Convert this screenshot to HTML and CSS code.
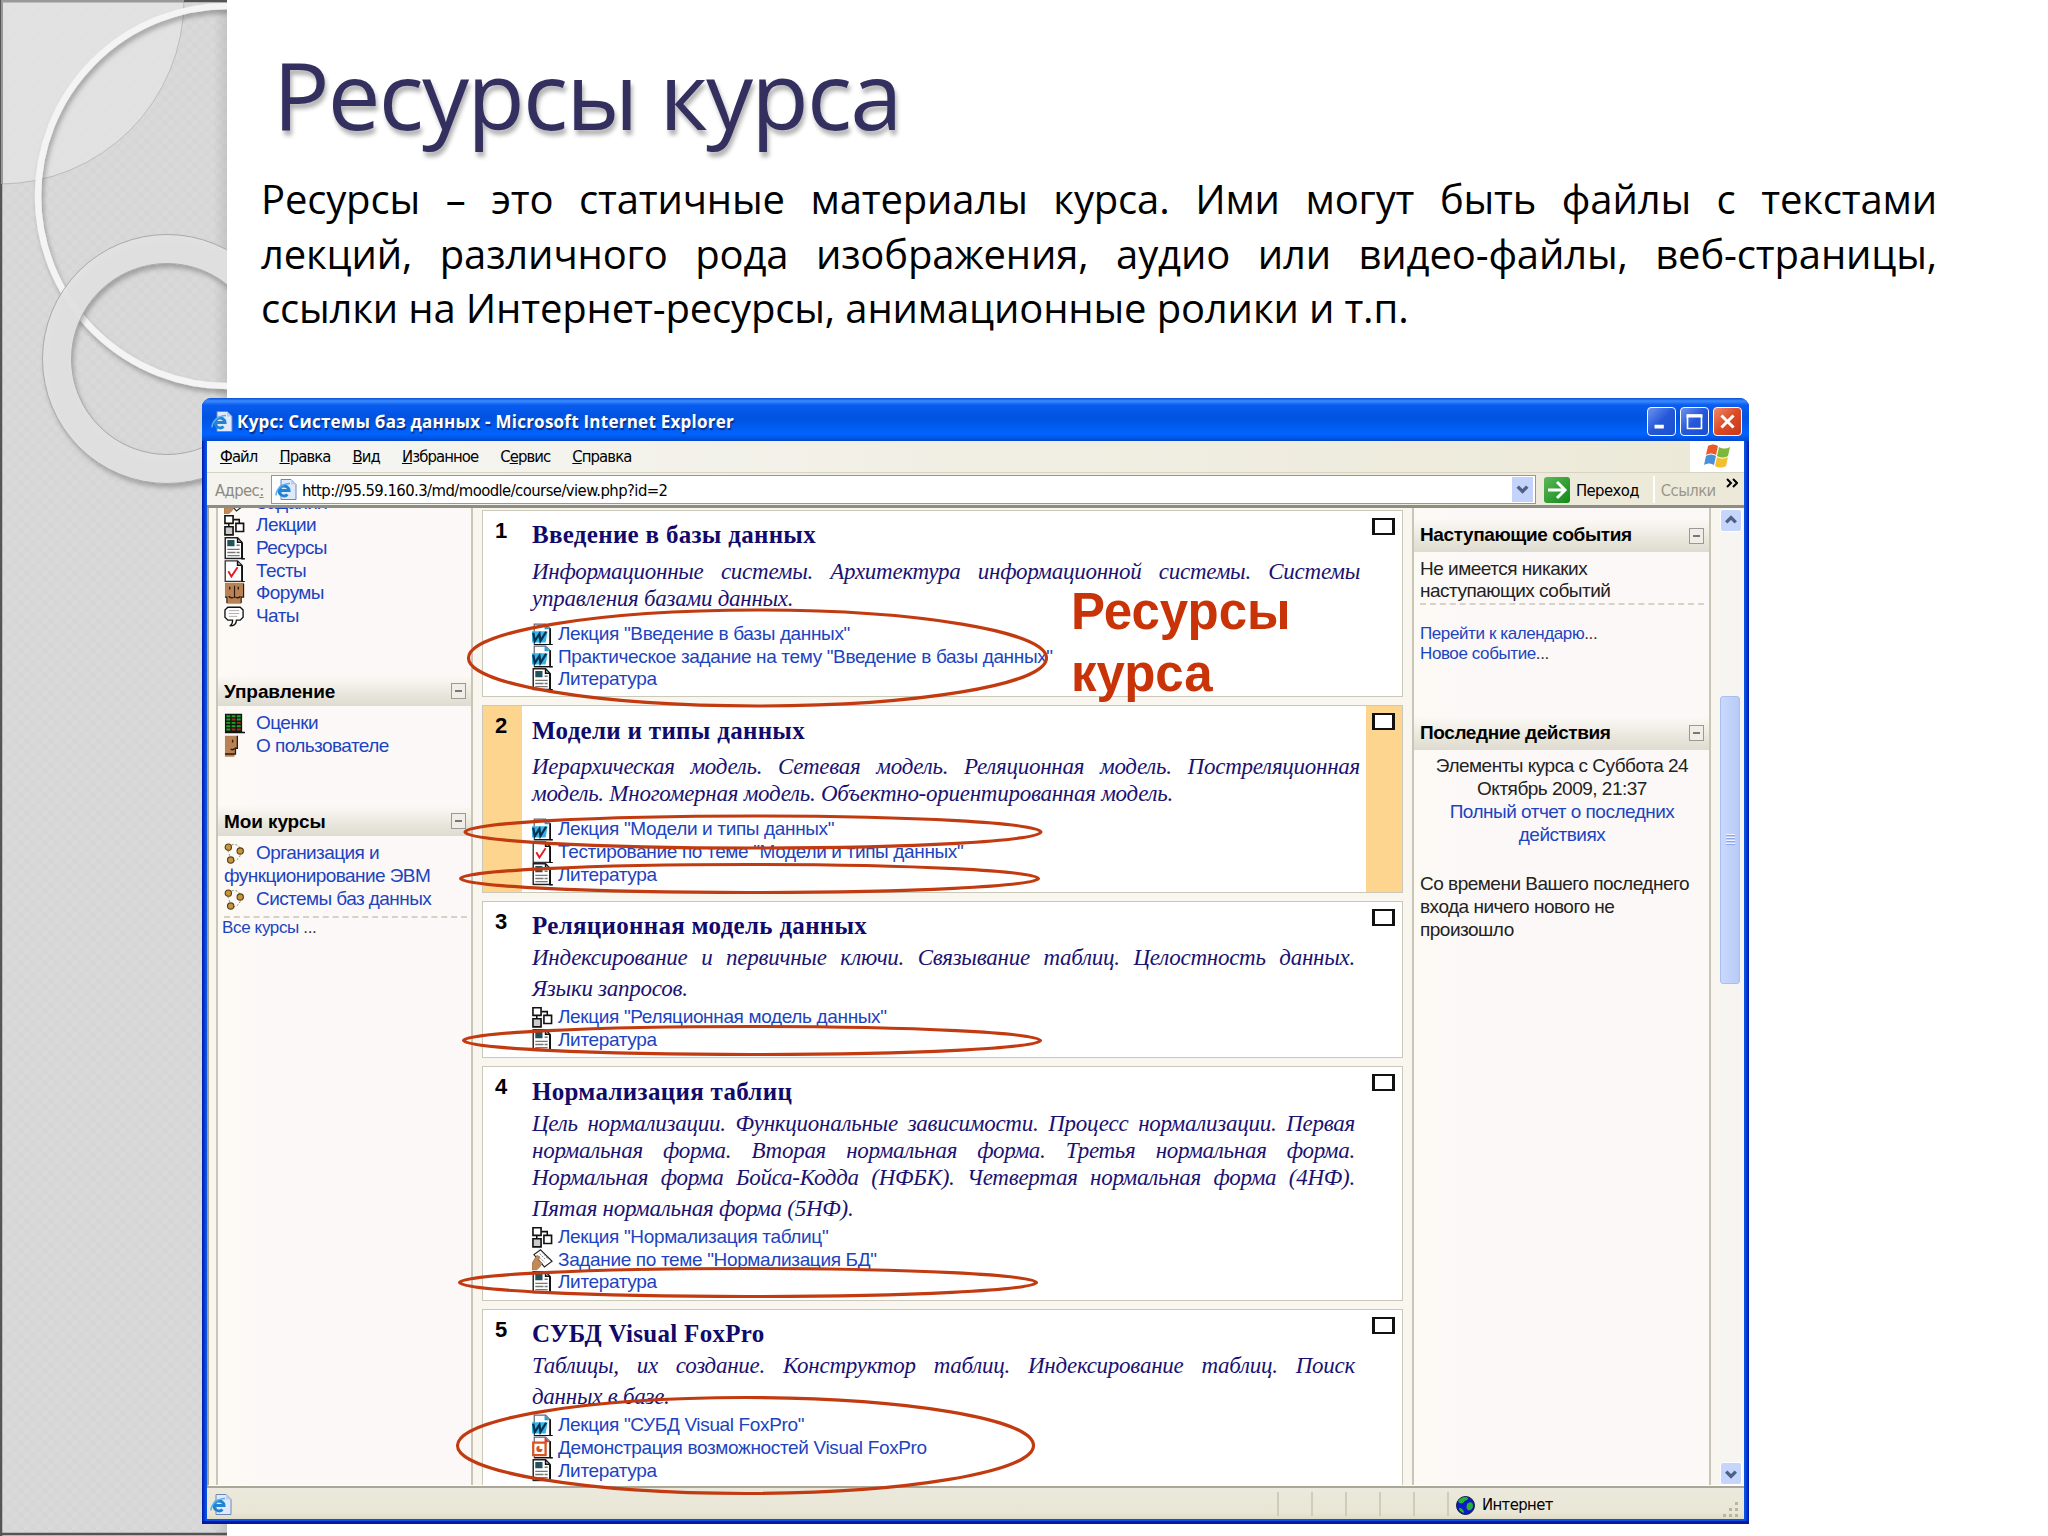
FILE: index.html
```html
<!DOCTYPE html>
<html lang="ru">
<head>
    <meta charset="UTF-8">
    <title>Ресурсы курса</title>
    <link rel="stylesheet" href="styles.css">
</head>
<body>
<!-- icons -->
<svg class="sprite" width="0" height="0">
    <symbol id="i-doc" viewBox="0 0 20 22">
        <path d="M1 .8h12l4 4v16H1z" fill="#fff" stroke="#222" stroke-width="1.4"/>
        <path d="M17.5 5v16.2H20M13 1v4h4" fill="none" stroke="#111" stroke-width="1.5"/>
        <path d="M3 3h7v6H3z" fill="#24505c"/>
        <path d="M12 8h3M3 12h12M3 15h8M12 15h3M3 18h12" stroke="#777" stroke-width="1.3"/>
    </symbol>
    <symbol id="i-word" viewBox="0 0 20 22">
        <path d="M2 1h11l4 4v16H2z" fill="#fff" stroke="#667" stroke-width="1.2"/>
        <path d="M17.5 5v16.2H20M2 21h16" fill="none" stroke="#111" stroke-width="1.5"/>
        <path d="M12 1l5 5h-5z" fill="#2a9bd8"/>
        <path d="M-1 8h16l-2 11H0z" fill="#36b4e6"/>
        <path d="M1 9.5l1.500 8 4.500-7 1 7 5.500-9" fill="none" stroke="#06304f" stroke-width="2.200"/>
    </symbol>
    <symbol id="i-ppt" viewBox="0 0 20 22">
        <path d="M2 1h11l4 4v16H2z" fill="#fff" stroke="#667" stroke-width="1.2"/>
        <path d="M17.500 5v16.200H20M2 21h16" fill="none" stroke="#111" stroke-width="1.500"/>
        <path d="M12 1l5 5h-5z" fill="#d33"/>
        <path d="M1 6.500h12v12H1z" fill="#fff" stroke="#d9531e" stroke-width="2.200"/>
        <path d="M7 9.500a3 3 0 1 0 3 3H7z" fill="#d9531e"/>
    </symbol>
    <symbol id="i-test" viewBox="0 0 20 22">
        <path d="M1 .8h12l4 4v16H1z" fill="#fff" stroke="#333" stroke-width="1.300"/>
        <path d="M17.500 5v16.200H20M13 1v4h4" fill="none" stroke="#111" stroke-width="1.500"/>
        <path d="M4 11l3 5 6-9" fill="none" stroke="#e3161c" stroke-width="1.800"/>
    </symbol>
    <symbol id="i-lesson" viewBox="0 0 22 22">
        <path d="M10 5h6v5M5 9v4" fill="none" stroke="#111" stroke-width="1.600"/>
        <path d="M1 1h8.500v8H1zM12.500 9h8v8.500h-8z" fill="#fff" stroke="#111" stroke-width="1.700"/>
        <path d="M1 12.500h8.500V21H1z" fill="#ccc" stroke="#111" stroke-width="1.700"/>
    </symbol>
    <symbol id="i-task" viewBox="0 0 22 22">
        <path d="M9 1l12 12-8 6L2 6z" fill="#fff" stroke="#222" stroke-width="1.200"/>
        <path d="M8 5l6 6M11 4l6 7M8 9l5 5" stroke="#888" stroke-dasharray="2 1"/>
        <path d="M0 22v-7l5-8 3 1-1 4 4 3-3 4-3 3z" fill="#c08a5a" stroke="#8a5a30" stroke-width=".6"/>
    </symbol>
    <symbol id="i-forum" viewBox="0 0 22 22">
        <path d="M1 0h20v15h-3v7H3v-7H1z" fill="#b98254"/>
        <path d="M11 3v13M1 15h2v6M20.500 1v14H18v6" fill="none" stroke="#2c1a0c" stroke-width="1.200"/>
        <path d="M6 4v3M15 4v3M5 14c2 2 4 2 5 1M12 15c2 1 4 1 5-1" fill="none" stroke="#2c1a0c" stroke-width="1.400"/>
    </symbol>
    <symbol id="i-chat" viewBox="0 0 22 22">
        <path d="M4 1.500h13l3 3V12l-3 3h-4c0 4-2 6-7 6 2-1 3-3 3-6H4l-3-3V4.500z" fill="#fff" stroke="#111" stroke-width="1.400"/>
        <path d="M5 5h11M5 8h11M5 11h9" stroke="#aaa"/>
    </symbol>
    <symbol id="i-grades" viewBox="0 0 22 22">
        <path d="M1 1h18v19H1z" fill="#0d1a0d"/>
        <path d="M2.500 3.500h4M2.500 7h4M2.500 10.500h4M2.500 14h4M2.500 17.500h4M8 3.500h4M8 10.500h4M8 14h4M13.500 7h4M13.500 14h4M13.500 3.500h4" stroke="#1fa52a" stroke-width="2"/>
        <path d="M8 7h4M13.500 10.500h4M8 17.500h4M13.500 17.500h4" stroke="#b3261b" stroke-width="2"/>
        <path d="M1 20.500h21" stroke="#111" stroke-width="1.500"/>
    </symbol>
    <symbol id="i-user" viewBox="0 0 22 22">
        <path d="M1 0h13v13h-2v5h-1v4H1z" fill="#b98254"/>
        <path d="M14 0v13h-2v6H1M9 4v3M7 14c2 1 3 1 4-1" fill="none" stroke="#2c1a0c" stroke-width="1.400"/>
    </symbol>
    <symbol id="i-course" viewBox="0 0 22 22">
        <path d="M8 2c5-1 8 1 9 4M17 13c-1 3-3 5-7 6M4 8l3 8" fill="none" stroke="#886" stroke-dasharray="2 2"/>
        <g fill="#c9953c" stroke="#55401c" stroke-width="1.200">
            <circle cx="4.500" cy="4.500" r="3.300"/><circle cx="17" cy="8.500" r="3.300"/><circle cx="7" cy="18" r="3.300"/>
        </g>
    </symbol>
    <symbol id="i-ie" viewBox="0 0 22 22">
        <path d="M6 1h10l5 5v15H6z" fill="#dfe9fb" stroke="#6d86b8"/>
        <path d="M16 1v5h5z" fill="#b9cdec"/>
        <path d="M4.500 12h9.500a5 5 0 1 0-1.500 4" fill="none" stroke="#2183d4" stroke-width="3"/>
        <path d="M1 17C1 10 8 5 15 5" fill="none" stroke="#57aef0" stroke-width="1.500"/>
    </symbol>
</svg>

<div class="slide">
    <aside class="stripe">
        <svg width="227" height="1536" viewBox="0 0 227 1536">
            <defs>
                <pattern id="grain" width="12" height="12" patternUnits="userSpaceOnUse">
                    <path d="M0 0h6v6H0zM6 6h6v6H6z" fill="#fff" opacity=".07"/>
                </pattern>
                <linearGradient id="edge" x1="0" x2="1">
                    <stop offset="0" stop-color="#999" stop-opacity="0"/>
                    <stop offset="1" stop-color="#999" stop-opacity=".3"/>
                </linearGradient>
                <filter id="soft" x="-20%" y="-20%" width="140%" height="140%">
                    <feDropShadow dx="2" dy="4" stdDeviation="2.500" flood-color="#000" flood-opacity=".28"/>
                </filter>
            </defs>
            <rect width="227" height="1536" fill="#d6d6d6"/>
            <rect width="227" height="1536" fill="url(#grain)"/>
            <rect x="213" width="14" height="1536" fill="url(#edge)"/>
            <circle cx="0" cy="0" r="184" fill="#e4e4e4" fill-opacity=".75" stroke="#bbb"/>
            <circle cx="228" cy="196" r="190" fill="none" stroke="#f4f4f4" stroke-width="6.500" filter="url(#soft)"/>
            <circle cx="167" cy="359" r="110" fill="none" stroke="#e2e2e2" stroke-opacity=".93" stroke-width="29" filter="url(#soft)"/>
            <circle cx="167" cy="359" r="124.500" fill="none" stroke="#aaa"/>
            <circle cx="167" cy="359" r="95.500" fill="none" stroke="#aaa"/>
            <path d="M1 1536V1h226M1 1534h226" fill="none" stroke="#555" stroke-width="2.500"/>
            <path d="M2 184V1h182" fill="none" stroke="#999" stroke-width="2"/>
        </svg>
    </aside>
    <main class="text">
        <h1>Ресурсы курса</h1>
        <p class="lead">
            <span>Ресурсы – это статичные материалы курса. Ими могут быть файлы с текстами</span>
            <span>лекций, различного рода изображения, аудио или видео-файлы, веб-страницы,</span>
            <span class="last">ссылки на Интернет-ресурсы, анимационные ролики и т.п.</span>
        </p>
    </main>
</div>

<div class="window">
    <div class="titlebar">
        <svg class="ico"><use href="#i-ie"/></svg>
        <b>Курс: Системы баз данных - Microsoft Internet Explorer</b>
        <div class="win-btns">
            <svg viewBox="0 0 29 29"><path d="M7 20h10" stroke="#fff" stroke-width="4"/></svg>
            <svg viewBox="0 0 29 29"><path d="M7 8h15v14H7z" fill="none" stroke="#fff" stroke-width="1.800"/><path d="M6 8.500h17" stroke="#fff" stroke-width="3.500"/></svg>
            <svg class="close" viewBox="0 0 29 29"><path d="M8 8l13 13M21 8L8 21" stroke="#fff" stroke-width="3.200"/></svg>
        </div>
    </div>
    <div class="menubar">
        <span><u>Ф</u>айл</span><span><u>П</u>равка</span><span><u>В</u>ид</span><span><u>И</u>збранное</span><span>С<u>е</u>рвис</span><span><u>С</u>правка</span>
        <div class="flag">
            <svg width="28" height="26" viewBox="0 0 28 26">
                <path d="M5 2c4-2 7-2 10 0l-2 9c-3-2-6-2-10 0z" fill="#ea5a2b"/>
                <path d="M16 3c4 2 7 2 11 0l-2 9c-4 2-7 2-11 0z" fill="#7cb83a"/>
                <path d="M3 12c4-2 7-2 10 0l-2 9c-3-2-6-2-10 0z" fill="#4a90d9"/>
                <path d="M14 13c4 2 7 2 11 0l-2 9c-4 2-7 2-11 0z" fill="#f4bf2c"/>
            </svg>
        </div>
    </div>
    <div class="address">
        <span class="lbl">Адрес<u>:</u></span>
        <div class="url">
            <svg class="ico"><use href="#i-ie"/></svg>
            <span>http://95.59.160.3/md/moodle/course/view.php?id=2</span>
            <svg class="drop" viewBox="0 0 20 26"><path d="M5 10l5 5 5-5" fill="none" stroke="#4d6185" stroke-width="3.500"/></svg>
        </div>
        <svg class="go" viewBox="0 0 26 26"><path d="M4 13h16M13 5l8 8-8 8" fill="none" stroke="#fff" stroke-width="3"/></svg>
        <span class="go-text">Переход</span>
        <span class="links">Ссылки</span>
        <svg class="more" width="12" height="10" viewBox="0 0 12 10"><path d="M1 1l4 4-4 4M7 1l4 4-4 4" fill="none" stroke="#000" stroke-width="2"/></svg>
    </div>

    <div class="page">
        <div class="col left">
            <ul class="first">
                <li><svg><use href="#i-task"/></svg>Задания</li>
                <li><svg><use href="#i-lesson"/></svg>Лекции</li>
                <li><svg><use href="#i-doc"/></svg>Ресурсы</li>
                <li><svg><use href="#i-test"/></svg>Тесты</li>
                <li><svg><use href="#i-forum"/></svg>Форумы</li>
                <li><svg><use href="#i-chat"/></svg>Чаты</li>
            </ul>
            <h3>Управление<i></i></h3>
            <ul>
                <li><svg><use href="#i-grades"/></svg>Оценки</li>
                <li><svg><use href="#i-user"/></svg>О пользователе</li>
            </ul>
            <h3>Мои курсы<i></i></h3>
            <ul class="dashed">
                <li><svg><use href="#i-course"/></svg>Организация и</li>
                <li>функционирование ЭВМ</li>
                <li><svg><use href="#i-course"/></svg>Системы баз данных</li>
            </ul>
            <p class="small"><a>Все курсы</a> ...</p>
        </div>

        <div class="topics">
            <section class="topic">
                <b class="num">1</b>
                <div class="body">
                    <h2>Введение в базы данных</h2>
                    <p><span>Информационные системы. Архитектура информационной системы. Системы</span><span class="last">управления базами данных.</span></p>
                    <ul>
                        <li><svg><use href="#i-word"/></svg>Лекция "Введение в базы данных"</li>
                        <li><svg><use href="#i-word"/></svg>Практическое задание на тему "Введение в базы данных"</li>
                        <li><svg><use href="#i-doc"/></svg>Литература</li>
                    </ul>
                </div>
                <div class="side"><i></i></div>
            </section>
            <section class="topic current">
                <b class="num">2</b>
                <div class="body">
                    <h2>Модели и типы данных</h2>
                    <p><span>Иерархическая модель. Сетевая модель. Реляционная модель. Постреляционная</span><span class="last">модель. Многомерная модель. Объектно-ориентированная модель.</span></p>
                    <ul>
                        <li><svg><use href="#i-word"/></svg>Лекция "Модели и типы данных"</li>
                        <li><svg><use href="#i-test"/></svg>Тестирование по теме "Модели и типы данных"</li>
                        <li><svg><use href="#i-doc"/></svg>Литература</li>
                    </ul>
                </div>
                <div class="side"><i></i></div>
            </section>
            <section class="topic tight">
                <b class="num">3</b>
                <div class="body">
                    <h2>Реляционная модель данных</h2>
                    <p><span>Индексирование и первичные ключи. Связывание таблиц. Целостность данных.</span><span class="last">Языки запросов.</span></p>
                    <ul>
                        <li><svg><use href="#i-lesson"/></svg>Лекция "Реляционная модель данных"</li>
                        <li><svg><use href="#i-doc"/></svg>Литература</li>
                    </ul>
                </div>
                <div class="side"><i></i></div>
            </section>
            <section class="topic tight">
                <b class="num">4</b>
                <div class="body">
                    <h2>Нормализация таблиц</h2>
                    <p><span>Цель нормализации. Функциональные зависимости. Процесс нормализации. Первая</span><span>нормальная форма. Вторая нормальная форма. Третья нормальная форма.</span><span>Нормальная форма Бойса-Кодда (НФБК). Четвертая нормальная форма (4НФ).</span><span class="last">Пятая нормальная форма (5НФ).</span></p>
                    <ul>
                        <li><svg><use href="#i-lesson"/></svg>Лекция "Нормализация таблиц"</li>
                        <li><svg><use href="#i-task"/></svg>Задание по теме "Нормализация БД"</li>
                        <li><svg><use href="#i-doc"/></svg>Литература</li>
                    </ul>
                </div>
                <div class="side"><i></i></div>
            </section>
            <section class="topic tight">
                <b class="num">5</b>
                <div class="body">
                    <h2>СУБД Visual FoxPro</h2>
                    <p><span>Таблицы, их создание. Конструктор таблиц. Индексирование таблиц. Поиск</span><span class="last">данных в базе.</span></p>
                    <ul>
                        <li><svg><use href="#i-word"/></svg>Лекция "СУБД Visual FoxPro"</li>
                        <li><svg><use href="#i-ppt"/></svg>Демонстрация возможностей Visual FoxPro</li>
                        <li><svg><use href="#i-doc"/></svg>Литература</li>
                    </ul>
                </div>
                <div class="side"><i></i></div>
            </section>
        </div>

        <div class="col right">
            <h3>Наступающие события<i></i></h3>
            <p class="events">Не имеется никаких<br>наступающих событий</p>
            <p class="small"><a>Перейти к календарю</a>...<br><a>Новое событие</a>...</p>
            <h3>Последние действия<i></i></h3>
            <p class="recent">Элементы курса с Суббота 24<br>Октябрь 2009, 21:37<br><a>Полный отчет о последних<br>действиях</a></p>
            <p class="news">Со времени Вашего последнего<br>входа ничего нового не<br>произошло</p>
        </div>

        <div class="scroll">
            <svg class="sbtn" viewBox="0 0 20 22"><path d="M5 13l5-5 5 5" fill="none" stroke="#4d6185" stroke-width="3.500"/></svg>
            <div class="thumb"><i></i></div>
            <svg class="sbtn" viewBox="0 0 20 22"><path d="M5 9l5 5 5-5" fill="none" stroke="#4d6185" stroke-width="3.500"/></svg>
        </div>
    </div>

    <div class="status">
        <svg class="ico"><use href="#i-ie"/></svg>
        <i></i><i></i><i></i><i></i><i></i>
        <div class="zone">
            <svg width="19" height="19" viewBox="0 0 19 19">
                <circle cx="9.500" cy="9.500" r="9" fill="#1118c8" stroke="#0b1a3a"/>
                <path d="M2 5c3-4 8-5 10-3 1 2-3 2-4 4S3 8 2 5zM12 7c3-2 5 0 5 3s-3 5-5 4-2-5 0-7zM3 12c3 0 5 2 5 5-3-1-5-2-5-5z" fill="#27b336"/>
            </svg>
            Интернет
        </div>
        <svg class="grip" width="16" height="16" viewBox="0 0 16 16"><path d="M12 0h3v3h-3zM6 6h3v3H6zM12 6h3v3h-3zM0 12h3v3H0zM6 12h3v3H6zM12 12h3v3h-3z" fill="#b9b5a2"/></svg>
    </div>
</div>

<!-- marks over the browser window -->
<svg class="marks" width="2048" height="1536" viewBox="0 0 2048 1536">
    <ellipse cx="757.500" cy="658" rx="289" ry="48"/>
    <ellipse cx="753" cy="832" rx="288" ry="16"/>
    <ellipse cx="749.500" cy="878.500" rx="289" ry="14"/>
    <ellipse cx="752" cy="1040.500" rx="288.500" ry="14"/>
    <ellipse cx="748" cy="1282.500" rx="288.500" ry="14"/>
    <ellipse cx="745.500" cy="1445.500" rx="288" ry="48"/>
</svg>
<div class="callout">Ресурсы<br>курса</div>
</body>
</html>
```
FILE: styles.css
```css
body {
    margin: 0;
    width: 2048px;
    height: 1536px;
    overflow: hidden;
    position: relative;
    background: #fff;
    font-family: "Liberation Sans", Arial, sans-serif;
}

h1, h2, h3, p, ul {
    margin: 0;
    padding: 0;
}

ul {
    list-style: none;
}

.sprite {
    position: absolute;
}

/* slide */
.slide {
    display: grid;
    grid-template-columns: 227px 1fr;
    height: 1536px;
}

.stripe svg {
    display: block;
}

.text {
    padding: 30px 111px 0 34px;
    font-family: "Open Sans", "Noto Sans", sans-serif;
}

h1 {
    padding-left: 12px;
    font-size: 94px;
    font-weight: 400;
    line-height: 128px;
    letter-spacing: -1.8px;
    color: #33305f;
    text-shadow: 2px 5px 4px rgba(0, 0, 0, .3);
}

.lead {
    margin-top: 14px;
    font-size: 40px;
    line-height: 54.5px;
    letter-spacing: -.15px;
    color: #000;
}

.lead span, .body p span {
    display: block;
    white-space: nowrap;
    text-align: justify;
    text-align-last: justify;
}

.lead .last, .body p .last {
    text-align-last: left;
}

/* browser window */
.window {
    position: absolute;
    left: 202px;
    top: 398px;
    width: 1547px;
    height: 1126px;
    box-sizing: border-box;
    padding: 0 5px 5px;
    display: flex;
    flex-direction: column;
    border-radius: 9px 9px 0 0;
    background: linear-gradient(90deg, #0019a8, #0a52e6 4px, #0a52e6 1543px, #0019a8);
    box-shadow: inset 0 -3px 0 #0019a0;
}

.ico {
    width: 22px;
    height: 23px;
    flex: none;
}

.titlebar {
    height: 43px;
    box-sizing: border-box;
    flex: none;
    margin: 0 -5px;
    padding: 4px 7px 0 9px;
    display: flex;
    align-items: center;
    border-radius: 9px 9px 0 0;
    background: linear-gradient(#0a4fd0, #3a8cff 3px, #0a5cf0 7px, #0053e0 20px, #0064ff 36px, #0048d0);
}

.titlebar b {
    margin: 1px 0 0 4px;
    font: bold 17px/24px "Open Sans", sans-serif;
    letter-spacing: .25px;
    color: #fff;
    text-shadow: 1px 2px 1px #0a2a80;
}

.win-btns {
    margin-left: auto;
    display: flex;
    gap: 4px;
}

.win-btns svg {
    width: 27px;
    height: 27px;
    border: 1.5px solid #fff;
    border-radius: 4px;
    background: linear-gradient(135deg, #6d93f0, #2458d8 50%, #1c4fd0);
}

.win-btns .close {
    background: linear-gradient(135deg, #ee8a6c, #dc4a24 50%, #c8381a);
}

.menubar, .address, .status {
    flex: none;
    font: 16.5px/24px "DejaVu Sans Condensed", "DejaVu Sans", sans-serif;
    letter-spacing: -.6px;
    color: #000;
}

.menubar {
    height: 31px;
    padding-left: 13px;
    display: flex;
    align-items: center;
    gap: 22px;
    letter-spacing: -.9px;
    background: linear-gradient(90deg, #f6f6f4, #f1efe4 50%, #ece9d8);
    border-bottom: 1px solid #d8d4c4;
}

.flag {
    margin-left: auto;
    width: 54px;
    height: 31px;
    display: flex;
    align-items: center;
    justify-content: center;
    background: #fff;
}

.address {
    height: 32px;
    padding-left: 8px;
    display: flex;
    align-items: center;
    background: linear-gradient(90deg, #f4f3ee, #ece9d8);
    border-bottom: 3px solid #8e8d82;
}

.address > span, .url span {
    padding-top: 3px;
}

.lbl {
    width: 56px;
    color: #8c8a80;
}

.url {
    width: 1258px;
    height: 27px;
    padding: 0 2px 0 3px;
    display: flex;
    align-items: center;
    background: #fff;
    border: 1.5px solid #7f9db9;
}

.url span {
    margin-left: 5px;
    letter-spacing: -.56px;
}

.drop {
    width: 21px;
    height: 25px;
    margin-left: auto;
    background: #c3d3fb;
}

.go {
    width: 26px;
    height: 26px;
    margin: 2px 6px 0 8px;
    border-radius: 3px;
    background: linear-gradient(135deg, #5cb85a, #108a16);
}

.links {
    margin-left: 14px;
    padding-left: 6px;
    border-left: 2px solid #fff;
    color: #9a978a;
}

.more {
    margin: -12px 0 0 10px;
}

/* moodle page */
.page {
    flex: 1;
    min-height: 0;
    overflow: hidden;
    display: flex;
    background: #f8f6ef;
    border-left: 2px solid #a5a393;
    border-bottom: 1px solid #fff;
}

.col {
    flex: none;
    box-sizing: border-box;
    border: solid #c9c6b8;
    border-width: 0 2px;
    background: linear-gradient(90deg, #fdfaf4, #fcf8f7 40px);
    font-size: 19px;
    line-height: 22.7px;
}

.left {
    width: 257px;
    margin-left: 7px;
    letter-spacing: -.57px;
    color: #1c44c0;
}

.col ul, .left .small {
    margin-left: 6px;
}

li {
    display: flex;
    align-items: center;
    height: 22.7px;
    white-space: nowrap;
}

li svg {
    flex: none;
    width: 21px;
    height: 22.7px;
    margin-right: 11px;
}

.left .first {
    margin-top: -16.5px;
}

.left ul {
    margin-top: 6px;
}

.left h3 {
    height: 30px;
    letter-spacing: -.1px;
    line-height: 27px;
}

.left ul + h3 {
    margin-top: 48.7px;
}

.col h3 {
    padding: 0 5px 0 6px;
    display: flex;
    justify-content: space-between;
    align-items: center;
    font-size: 19px;
    color: #000;
    background: linear-gradient(#fcf9f5, #e9e7dd 60%, #dedcd0);
}

.col h3 i {
    width: 13px;
    height: 14px;
    border: 1px solid #999;
    background: linear-gradient(#777, #777) center / 7px 2px no-repeat #efede6;
}

.left .dashed {
    margin-right: 4px;
    padding-bottom: 6px;
    border-bottom: 2px dashed #d6d2c6;
}

.small {
    font-size: 17px;
    line-height: 20px;
    letter-spacing: -.4px;
    color: #333;
}

.left .small {
    margin-left: 4px;
    letter-spacing: -.35px;
}

.col a {
    color: #1c44c0;
}

.right {
    width: 299px;
    margin-left: 9px;
    letter-spacing: -.5px;
    color: #222;
}

.right h3 {
    height: 33px;
    margin-top: 11px;
    letter-spacing: -.4px;
}

.right p {
    margin: 0 5px 0 6px;
    white-space: nowrap;
}

.right .events {
    margin-top: 5.5px;
    border-bottom: 2px dashed #d6d2c6;
}

.right .small {
    margin-top: 19px;
}

.right .small + h3 {
    margin-top: 53px;
}

.right .recent {
    margin-top: 5.5px;
    text-align: center;
}

.right .news {
    margin-top: 27px;
}

.topics {
    width: 921px;
    flex: none;
    margin-left: 9px;
    padding-top: 2px;
    display: flex;
    flex-direction: column;
    gap: 8px;
}

.topic {
    flex: none;
    display: grid;
    grid-template-columns: 39px 1fr 36px;
    border: 1.5px solid #cac8b8;
    background: #fff;
}

.num {
    padding: 8px 0 0 12px;
    font-size: 22px;
    line-height: 24px;
}

.current .num, .current .side {
    background: #fed58f;
}

.body {
    padding: 9.3px 6px 5.7px 10px;
}

h2 {
    font: bold 25px/30px "Liberation Serif", serif;
    letter-spacing: .3px;
    color: #110a6a;
    white-space: nowrap;
}

.body p {
    margin: 7.3px 0 11px;
    font: italic 23px/27px "Liberation Serif", serif;
    letter-spacing: -.26px;
    color: #1a1272;
}

.body li {
    font-size: 19px;
    letter-spacing: -.35px;
    color: #1c44c0;
}

.body li svg {
    margin-right: 5px;
}

.tight .body {
    padding-right: 11px;
    padding-bottom: 5.9px;
}

.tight p {
    margin: 3px 0 0;
}

.tight p .last {
    line-height: 35px;
}

.side i {
    display: block;
    width: 17px;
    height: 13px;
    margin: 7px 0 0 6px;
    border: solid #111;
    border-width: 2px 3px;
    background: #fff;
}

.scroll {
    width: 22px;
    margin: 1px 2px 0 auto;
    display: flex;
    flex-direction: column;
    background: #f7f5f1;
}

.sbtn {
    width: 20px;
    height: 21px;
    flex: none;
    border: 1px solid #fff;
    border-radius: 3px;
    background: #c6d5fc;
}

.thumb {
    width: 18px;
    height: 286px;
    margin: 164px 0 auto;
    display: flex;
    align-items: center;
    justify-content: center;
    border: 1.5px solid #a9bff2;
    border-radius: 3px;
    background: linear-gradient(90deg, #c9d8fd, #b8cbf8);
}

.thumb i {
    width: 9px;
    height: 12px;
    background: repeating-linear-gradient(#eef3ff 0 1px, #8ca6e8 1px 2px, transparent 2px 3px);
}

/* status bar */
.status {
    height: 31px;
    display: flex;
    align-items: center;
    border-top: 2px solid #aaa798;
    background: linear-gradient(#ebe9dc, #e9e6d5 80%, #dfdcc8);
}

.status .ico {
    margin: 2px 1045px 0 3px;
}

.status > i, .zone {
    box-sizing: border-box;
    width: 34px;
    height: 24px;
    flex: none;
    border-left: 2px solid #cfccb9;
}

.zone {
    width: 290px;
    padding: 3px 0 0 7px;
    display: flex;
    align-items: center;
    gap: 7px;
}

.grip {
    margin: 12px 0 0 -14px;
}

/* marks */
.marks {
    position: absolute;
    left: 0;
    top: 0;
    fill: none;
    stroke: #c23a10;
    stroke-width: 3.2;
}

.callout {
    position: absolute;
    left: 1071px;
    top: 581px;
    font-size: 51px;
    line-height: 61.5px;
    font-weight: bold;
    color: #c83408;
}
```
